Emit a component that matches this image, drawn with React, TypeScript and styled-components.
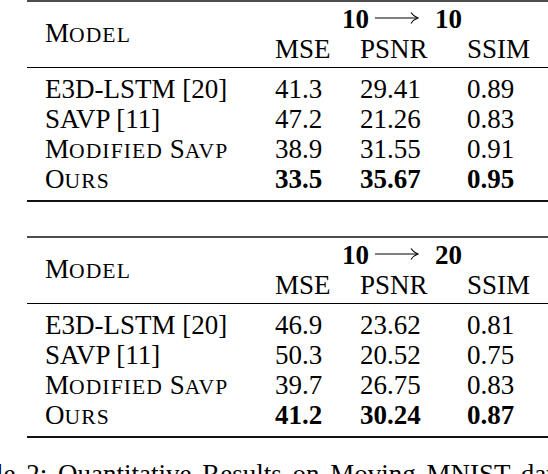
import React from "react";
import styled, { createGlobalStyle } from "styled-components";

const GlobalStyle = createGlobalStyle`
  html, body {
    margin: 0;
    padding: 0;
    background: #fff;
  }
  body {
    font-family: "Liberation Serif", "Times New Roman", serif;
    color: #000;
    overflow: hidden;
  }
`;

const COLS = "230px 85px 107px 62px";

const Page = styled.div`
  width: 548px;
  height: 474px;
  overflow: hidden;
  background: #fff;
`;

const Table = styled.section<{ $gap?: number }>`
  margin: ${props => props.$gap ?? 0}px 0 0 27px;
  border-top: 2px solid #4d4d4d;
  border-bottom: 2px solid #111;
  font-size: 27px;
`;

const Head = styled.div`
  display: grid;
  grid-template-columns: ${COLS};
  grid-template-rows: 30px 30px;
  padding: 2px 0 3px 18px;
  border-bottom: 1px solid #000;
  line-height: 30px;
`;

const ModelCell = styled.div`
  grid-row: 1 / 3;
  align-self: center;
  white-space: nowrap;
`;

const GroupCell = styled.div`
  grid-column: 2 / 5;
  display: flex;
  align-items: center;
  justify-content: center;
  font-weight: 700;
`;

const Arrow = styled.svg`
  width: 44px;
  height: 14px;
  margin: 0 16px 0 6px;
  position: relative;
  top: -1px;
`;

const Body = styled.div`
  padding: 6px 0;
`;

const Row = styled.div`
  display: grid;
  grid-template-columns: ${COLS};
  height: 30px;
  line-height: 30px;
  padding-left: 18px;
`;

const Cell = styled.div<{ $bold?: boolean }>`
  font-weight: ${props => (props.$bold ? 700 : 400)};
  white-space: nowrap;
`;

const Sc = styled.span`
  font-size: 0.8em;
  letter-spacing: 0.05em;
`;

const Caption = styled.p`
  margin: 21px 0 0 -44px;
  font-size: 27px;
  line-height: 31px;
  white-space: nowrap;
  word-spacing: 4px;
`;

const SmallCaps: React.FC<{ text: string }> = ({ text }) => (
  <>
    {text.split(" ").map((w, i) => (
      <React.Fragment key={i}>
        {i > 0 && " "}
        {w[0]}
        <Sc>{w.slice(1).toUpperCase()}</Sc>
      </React.Fragment>
    ))}
  </>
);

type Result = { name: string; sc?: boolean; mse: string; psnr: string; ssim: string; best?: boolean };

const tables: { from: number; to: number; rows: Result[] }[] = [
  {
    from: 10,
    to: 10,
    rows: [
      { name: "E3D-LSTM [20]", mse: "41.3", psnr: "29.41", ssim: "0.89" },
      { name: "SAVP [11]", mse: "47.2", psnr: "21.26", ssim: "0.83" },
      { name: "Modified SAVP", sc: true, mse: "38.9", psnr: "31.55", ssim: "0.91" },
      { name: "Ours", sc: true, mse: "33.5", psnr: "35.67", ssim: "0.95", best: true },
    ],
  },
  {
    from: 10,
    to: 20,
    rows: [
      { name: "E3D-LSTM [20]", mse: "46.9", psnr: "23.62", ssim: "0.81" },
      { name: "SAVP [11]", mse: "50.3", psnr: "20.52", ssim: "0.75" },
      { name: "Modified SAVP", sc: true, mse: "39.7", psnr: "26.75", ssim: "0.83" },
      { name: "Ours", sc: true, mse: "41.2", psnr: "30.24", ssim: "0.87", best: true },
    ],
  },
];

const LongArrow = () => (
  <Arrow viewBox="0 0 44 14">
    <path d="M0 7 H42" stroke="#000" strokeWidth="1.1" fill="none" />
    <path d="M36 1.5 Q38.5 5.5 43 7 Q38.5 8.5 36 12.5" stroke="#000" strokeWidth="1.1" fill="none" />
  </Arrow>
);

const App: React.FC = () => {
  return (
    <Page>
      <GlobalStyle />
      {tables.map((t, ti) => (
        <Table key={ti} $gap={ti === 0 ? 0 : 34}>
          <Head>
            <ModelCell>
              <SmallCaps text="Model" />
            </ModelCell>
            <GroupCell>
              {t.from}
              <LongArrow />
              {t.to}
            </GroupCell>
            <Cell>MSE</Cell>
            <Cell>PSNR</Cell>
            <Cell>SSIM</Cell>
          </Head>
          <Body>
            {t.rows.map(r => (
              <Row key={r.name}>
                <Cell>{r.sc ? <SmallCaps text={r.name} /> : r.name}</Cell>
                <Cell $bold={r.best}>{r.mse}</Cell>
                <Cell $bold={r.best}>{r.psnr}</Cell>
                <Cell $bold={r.best}>{r.ssim}</Cell>
              </Row>
            ))}
          </Body>
        </Table>
      ))}
      <Caption>Table 2: Quantitative Results on Moving MNIST dataset.</Caption>
    </Page>
  );
};

export default App;
